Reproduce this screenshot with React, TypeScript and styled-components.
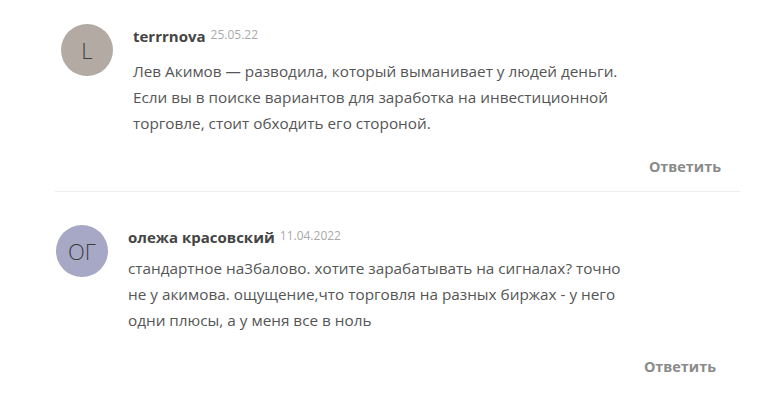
import React from "react";
import styled, { createGlobalStyle } from "styled-components";

const Global = createGlobalStyle`
  html, body { margin: 0; padding: 0; background: #fff; }
  body { font-family: "Open Sans", "Noto Sans", sans-serif; color: #555; }
`;

const List = styled.div`
  width: 773px;
  height: 400px;
  overflow: hidden;
  background: #fff;
  padding-top: 24px;
  box-sizing: border-box;
`;

const Comment = styled.div<{ $indent: number }>`
  display: grid;
  grid-template-columns: 52px 1fr;
  column-gap: 20px;
  padding-left: ${(p) => p.$indent}px;
  padding-right: ${(p) => 773 - p.$indent - 660}px;
`;

const Avatar = styled.div<{ $bg: string }>`
  width: 52px;
  height: 52px;
  border-radius: 50%;
  background: ${(p) => p.$bg};
  color: #3d3d3d;
  display: flex;
  align-items: center;
  justify-content: center;
  font-family: "Open Sans", sans-serif;
  font-size: 22px;
  font-weight: 300;
`;

const Body = styled.div`
  display: flex;
  flex-direction: column;
`;

const Head = styled.div`
  display: flex;
  align-items: baseline;
  gap: 5px;
  margin-top: 2px;
`;

const Name = styled.span`
  font-weight: 700;
  font-size: 15px;
  color: #444;
`;

const Date = styled.span`
  font-size: 12px;
  color: #aaa;
  position: relative;
  top: -3px;
`;

const Text = styled.p<{ $gap: number }>`
  margin: ${(p) => p.$gap}px 0 0;
  font-size: 15.3px;
  line-height: 26px;
  color: #555;
`;

const Reply = styled.div<{ $gap: number }>`
  align-self: flex-end;
  margin-top: ${(p) => p.$gap}px;
  font-weight: 700;
  font-size: 14.4px;
  color: #8a8a8a;
`;

const Divider = styled.hr`
  border: none;
  border-top: 1px solid #ececec;
  margin: 15px 33px 33px 55px;
`;

export default function App() {
  return (
    <>
      <Global />
      <List>
        <Comment $indent={61}>
          <Avatar $bg="#b2aaa3">L</Avatar>
          <Body>
            <Head>
              <Name>terrrnova</Name>
              <Date>25.05.22</Date>
            </Head>
            <Text $gap={12}>
              Лев Акимов — разводила, который выманивает у людей деньги.
              <br />
              Если вы в поиске вариантов для заработка на инвестиционной
              <br />
              торговле, стоит обходить его стороной.
            </Text>
            <Reply $gap={21}>Ответить</Reply>
          </Body>
        </Comment>
        <Divider />
        <Comment $indent={56}>
          <Avatar $bg="#a7a7c6">ОГ</Avatar>
          <Body>
            <Head>
              <Name>олежа красовский</Name>
              <Date>11.04.2022</Date>
            </Head>
            <Text $gap={8}>
              стандартное на3балово. хотите зарабатывать на сигналах? точно
              <br />
              не у акимова. ощущение,что торговля на разных биржах - у него
              <br />
              одни плюсы, а у меня все в ноль
            </Text>
            <Reply $gap={24}>Ответить</Reply>
          </Body>
        </Comment>
      </List>
    </>
  );
}
